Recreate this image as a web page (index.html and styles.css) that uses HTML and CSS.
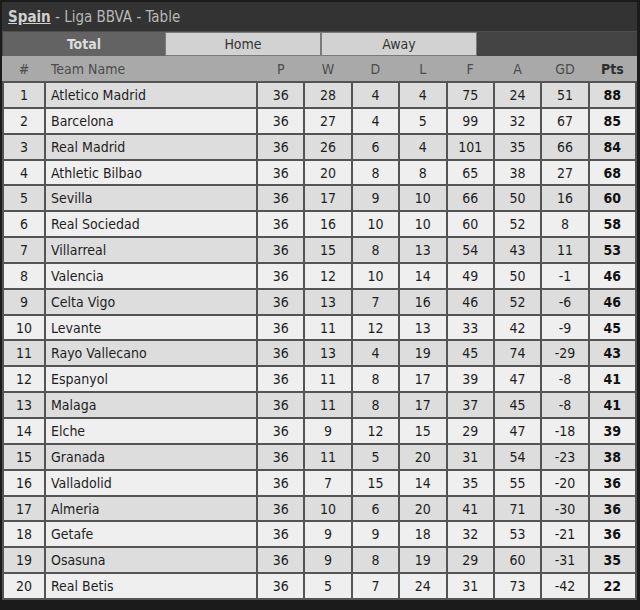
FILE: index.html
```html
<!DOCTYPE html>
<html>
<head>
<meta charset="utf-8">
<link rel="stylesheet" href="styles.css">
</head>
<body>
<div class="widget">
  <div class="title"><a class="country">Spain</a> - Liga BBVA - Table</div>
  <div class="tabs">
    <div class="tab active">Total</div>
    <div class="tab">Home</div>
    <div class="tab">Away</div>
  </div>
  <div class="head row">
    <div class="c">#</div><div class="l">Team Name</div><div class="c">P</div><div class="c">W</div><div class="c">D</div><div class="c">L</div><div class="c">F</div><div class="c">A</div><div class="c">GD</div><div class="c pts">Pts</div>
  </div>
  <div class="grid" id="grid"></div>
</div>
<script>
var d=[
["Atletico Madrid",36,28,4,4,75,24,51,88],
["Barcelona",36,27,4,5,99,32,67,85],
["Real Madrid",36,26,6,4,101,35,66,84],
["Athletic Bilbao",36,20,8,8,65,38,27,68],
["Sevilla",36,17,9,10,66,50,16,60],
["Real Sociedad",36,16,10,10,60,52,8,58],
["Villarreal",36,15,8,13,54,43,11,53],
["Valencia",36,12,10,14,49,50,-1,46],
["Celta Vigo",36,13,7,16,46,52,-6,46],
["Levante",36,11,12,13,33,42,-9,45],
["Rayo Vallecano",36,13,4,19,45,74,-29,43],
["Espanyol",36,11,8,17,39,47,-8,41],
["Malaga",36,11,8,17,37,45,-8,41],
["Elche",36,9,12,15,29,47,-18,39],
["Granada",36,11,5,20,31,54,-23,38],
["Valladolid",36,7,15,14,35,55,-20,36],
["Almeria",36,10,6,20,41,71,-30,36],
["Getafe",36,9,9,18,32,53,-21,36],
["Osasuna",36,9,8,19,29,60,-31,35],
["Real Betis",36,5,7,24,31,73,-42,22]];
var g=document.getElementById('grid'),h='';
d.forEach(function(r,i){
  var cls=i%2==0?'odd':'even';
  h+='<div class="cell c '+cls+'">'+(i+1)+'</div><div class="cell l '+cls+'">'+r[0]+'</div>';
  for(var k=1;k<r.length;k++){h+='<div class="cell c '+cls+(k==8?' pts':'')+'">'+r[k]+'</div>';}
});
g.innerHTML=h;
</script>
</body>
</html>
```
FILE: styles.css
```css
html, body { margin: 0; padding: 0; }
body {
  background: #1b1b1b;
  width: 640px;
  height: 610px;
  overflow: hidden;
  font-family: "DejaVu Sans Condensed", "DejaVu Sans", sans-serif;
  font-size: 14px;
}
.widget {
  margin: 2px 0 0 2px;
  width: 635px;
}
.title {
  height: 29px;
  line-height: 30px;
  background: #333333;
  color: #b8b8b8;
  font-size: 15px;
  padding-left: 6px;
}
.country {
  color: #d0d0d0;
  font-weight: bold;
  text-decoration: underline;
}
.tabs {
  display: flex;
  height: 24px;
  background: #444444;
  border-top: 1px solid #4e4e4e;
  padding-left: 1px;
}
.tab {
  width: 154px;
  height: 22px;
  line-height: 23px;
  text-align: center;
  background: #d2d2d2;
  color: #333;
  border: 1px solid #7a7a7a;
}
.tab.active {
  width: 162px;
  height: 24px;
  line-height: 24px;
  border: none;
  background: #636363;
  color: #dcdcdc;
  font-weight: bold;
}
.row, .grid {
  display: grid;
  grid-template-columns: 40px 210px repeat(8, 1fr);
  column-gap: 2px;
  padding: 0 2px;
}
.head {
  height: 25px;
  line-height: 26px;
  background: #a9a9a9;
  color: #4c4c4c;
}
.head .pts { color: #2e2e2e; font-weight: bold; }
.grid {
  background: #545454;
  row-gap: 2px;
  padding: 2px;
  grid-auto-rows: 23.85px;
}
.cell {
  line-height: 25px;
  color: #1e1e1e;
  overflow: hidden;
}
.odd { background: #dddddd; }
.even { background: #efefef; }
.c { text-align: center; }
.l { text-align: left; padding-left: 5px; }
.cell.pts { font-weight: bold; color: #111; }
```
